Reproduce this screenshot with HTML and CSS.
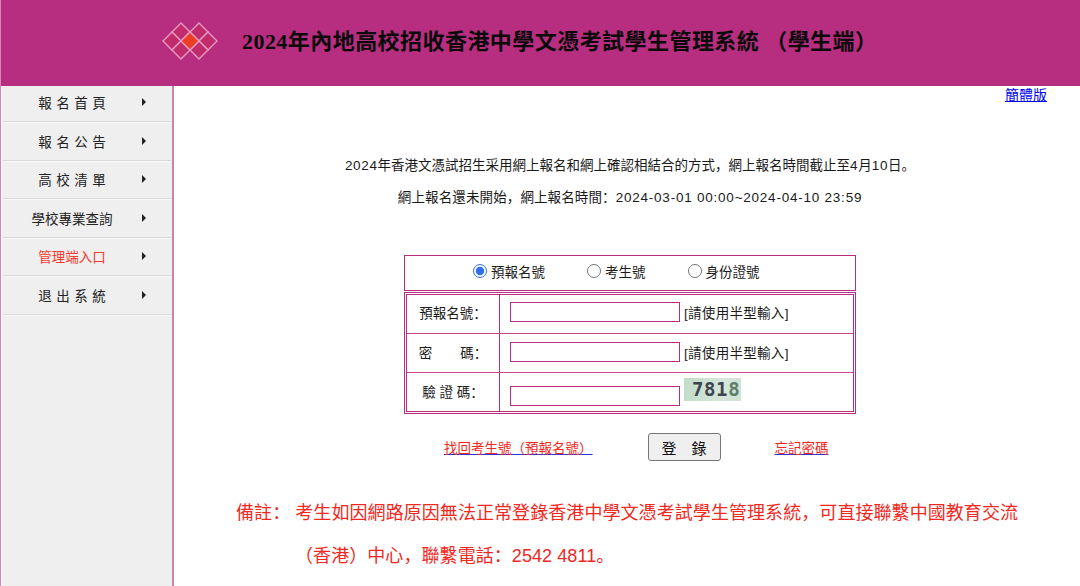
FILE: index.html
```html
<!DOCTYPE html>
<html lang="zh-Hans">
<head>
<meta charset="utf-8">
<title>2024年內地高校招收香港中學文憑考試學生管理系統</title>
<link rel="stylesheet" href="styles.css">
</head>
<body>
<header class="banner">
  <svg class="logo" width="56" height="40" viewBox="0 0 56 40" aria-hidden="true">
    <g stroke="#e79ac4" stroke-width="1.4">
      <path fill="#c02c6c" d="M19 1 28 10 19 19 10 10Z"/>
      <path fill="#c02c6c" d="M37 1 46 10 37 19 28 10Z"/>
      <path fill="#c02c6c" d="M10 10 19 19 10 28 1 19Z"/>
      <path fill="#c02c6c" d="M46 10 55 19 46 28 37 19Z"/>
      <path fill="#c02c6c" d="M19 19 28 28 19 37 10 28Z"/>
      <path fill="#c02c6c" d="M37 19 46 28 37 37 28 28Z"/>
      <path fill="#ee3d25" d="M28 10 37 19 28 28 19 19Z"/>
    </g>
  </svg>
  <h1 class="title">2024年內地高校招收香港中學文憑考試學生管理系統 （學生端）</h1>
</header>
<div class="layout">
  <nav class="sidebar">
    <a class="nav-item"><span class="nav-label spaced">報名首頁</span><span class="arrow"></span></a>
    <a class="nav-item"><span class="nav-label spaced">報名公告</span><span class="arrow"></span></a>
    <a class="nav-item"><span class="nav-label spaced">高校清單</span><span class="arrow"></span></a>
    <a class="nav-item"><span class="nav-label">學校專業查詢</span><span class="arrow"></span></a>
    <a class="nav-item active"><span class="nav-label">管理端入口</span><span class="arrow"></span></a>
    <a class="nav-item"><span class="nav-label spaced">退出系統</span><span class="arrow"></span></a>
  </nav>
  <main class="content">
    <div class="lang-row"><a class="lang" href="#">簡體版</a></div>
    <p class="intro"><span class="num">2024</span>年香港文憑試招生采用網上報名和網上確認相結合的方式，網上報名時間截止至<span class="num">4</span>月<span class="num">10</span>日。</p>
    <p class="intro second">網上報名還未開始，網上報名時間：<span class="num">2024-03-01 00:00~2024-04-10 23:59</span></p>
    <form class="login">
      <div class="id-type">
        <label class="radio r1"><input type="radio" name="t" checked>預報名號</label>
        <label class="radio r2"><input type="radio" name="t">考生號</label>
        <label class="radio"><input type="radio" name="t">身份證號</label>
      </div>
      <table class="fields">
        <tr class="row-1">
          <th>預報名號：</th>
          <td><input class="field" type="text"><span class="hint">[請使用半型輸入]</span></td>
        </tr>
        <tr class="row-2">
          <th class="pw"><span>密</span><span>碼：</span></th>
          <td><input class="field" type="text"><span class="hint">[請使用半型輸入]</span></td>
        </tr>
        <tr class="row-3">
          <th class="code">驗 證 碼：</th>
          <td class="code-cell"><input class="field" type="text"><span class="captcha">781<span class="fade">8</span></span></td>
        </tr>
      </table>
      <div class="actions">
        <a class="link" href="#">找回考生號（預報名號）</a>
        <button class="submit" type="button">登　錄</button>
        <a class="link" href="#">忘記密碼</a>
      </div>
    </form>
    <div class="note">
      <p>備註： 考生如因網路原因無法正常登錄香港中學文憑考試學生管理系統，可直接聯繫中國教育交流</p>
      <p class="note-2">（香港）中心，聯繫電話：2542 4811。</p>
    </div>
  </main>
</div>
</body>
</html>
```
FILE: styles.css
```css
* { box-sizing: border-box; }
html, body { margin: 0; height: 586px; overflow: hidden; }
body {
  background: #fff;
  color: #1a1a1a;
  font-family: "Liberation Sans", "Noto Sans CJK SC", sans-serif;
  font-size: 13.5px;
  padding-left: 1px;
  border-left: 1px solid #d884b4;
}
.banner {
  height: 86px;
  background: #b72d7f;
  display: flex;
  align-items: center;
  padding: 0 0 8px 161px;
  margin-left: -1px;
}
.logo { display: block; margin-top: 5px; }
.title {
  margin: 0 0 0 24px;
  font-family: "Liberation Serif", "Noto Sans CJK SC", serif;
  font-size: 22px;
  font-weight: 700;
  color: #0a0a0a;
  white-space: pre;
  letter-spacing: 0.45px;
}
.layout { display: flex; height: 500px; }
.sidebar {
  width: 172px;
  flex: none;
  background: #efefef;
  border-right: 2px solid #d17fb2;
  padding: 0 1px;
}
.nav-item {
  height: 38.5px;
  display: flex;
  align-items: center;
  border-bottom: 1px solid #d9d9d9;
  box-shadow: 0 1px 0 #f8f8f8;
  color: #222;
}
.nav-item:first-child { height: 36px; padding-bottom: 3px; }
.nav-label {
  width: 138px;
  text-align: center;
  font-size: 13.5px;
  white-space: nowrap;
}
.nav-label.spaced { letter-spacing: 4.5px; padding-left: 4.5px; }
.active { color: #f23a2e; }
.arrow {
  width: 0;
  height: 0;
  margin-left: 1px;
  border-left: 4.5px solid #222;
  border-top: 4px solid transparent;
  border-bottom: 4px solid transparent;
}
.content { flex: 1; min-width: 0; padding-left: 6px; }
.lang-row { display: flex; justify-content: flex-end; padding-right: 33px; height: 20px; font-size: 14px; line-height: 18px; }
.lang { color: #0000ee; }
.intro { margin: 51px 0 0; text-align: center; line-height: 18px; }
.intro .num { letter-spacing: 0.65px; }
.intro.second { margin-top: 14px; letter-spacing: 0.12px; }
.intro.second .num { letter-spacing: 0.77px; }
.login { width: 452px; margin: 48px auto 0; }
.id-type {
  height: 36px;
  border: 1px solid #b72d7f;
  display: flex;
  align-items: center;
  padding: 0 0 4px 68px;
}
.radio { display: flex; align-items: center; }
.radio input { width: 14px; height: 14px; margin: 0 4px 0 0; accent-color: #2f6fed; }
.r1 { margin-right: 42px; }
.r2 { margin-right: 42px; }
.fields {
  width: 100%;
  margin-top: 1px;
  border: 1px solid #b72d7f;
  border-collapse: separate;
  border-spacing: 0;
  padding: 1px;
}
.fields th, .fields td { height: 39px; padding-top: 0; padding-bottom: 0; border-bottom: 1px solid #c8458f; font-weight: 400; font-size: 13.5px; }
.fields tr:first-child th, .fields tr:first-child td { height: 40px; border-top: 1px solid #b72d7f; }
.fields tr:last-child th, .fields tr:last-child td { border-bottom: 1px solid #b72d7f; }
.fields th { width: 94px; padding-left: 0; padding-right: 0; border-left: 1px solid #b72d7f; border-right: 1px solid #b72d7f; text-align: center; }
.fields td { padding-left: 10px; padding-right: 0; border-right: 1px solid #b72d7f; }
.fields .row-1 th, .fields .row-1 td { padding-bottom: 5px; }
.fields .row-2 th, .fields .row-2 td { padding-bottom: 3px; }
.fields .row-3 th { padding-bottom: 2px; }
.pw span:first-child { margin-right: 28px; }
.field {
  width: 170px;
  height: 20px;
  border: 1px solid #b72d7f;
  background: #fff;
  padding: 0;
  vertical-align: middle;
  margin-right: 4px;
}
.hint { vertical-align: middle; letter-spacing: 0.3px; }
.code-cell { position: relative; }
.fields .code-cell .field { margin-top: 8px; }
.captcha {
  position: absolute;
  left: 184px;
  top: 5px;
  width: 57px;
  height: 23px;
  padding-left: 8px;
  background: linear-gradient(90deg, #c3dcc9, #d6e6da 70%, #cfe2d5);
  color: #3d4550;
  font: 700 19px/23px "DejaVu Sans Mono", monospace;
  letter-spacing: 0.6px;
}
.fade { color: #5d7f68; }
.actions {
  display: flex;
  align-items: center;
  margin-top: 19px;
  height: 28px;
  padding-left: 40px;
}
.link { color: #f0281e; text-decoration-color: #2a35d8; }
.submit {
  width: 73px;
  height: 28px;
  margin: 0 54px 0 55px;
  padding: 0;
  background: #efefef;
  border: 1px solid #777;
  border-radius: 3px;
  color: #111;
  font: 15px "Liberation Sans", "Noto Sans CJK SC", sans-serif;
}
.note { margin: 31px 0 0 56px; color: #f0281e; font-size: 18px; letter-spacing: 0.07px; line-height: 43px; white-space: nowrap; }
.note p { margin: 0; }
.note-2 { padding-left: 59px; }
```
